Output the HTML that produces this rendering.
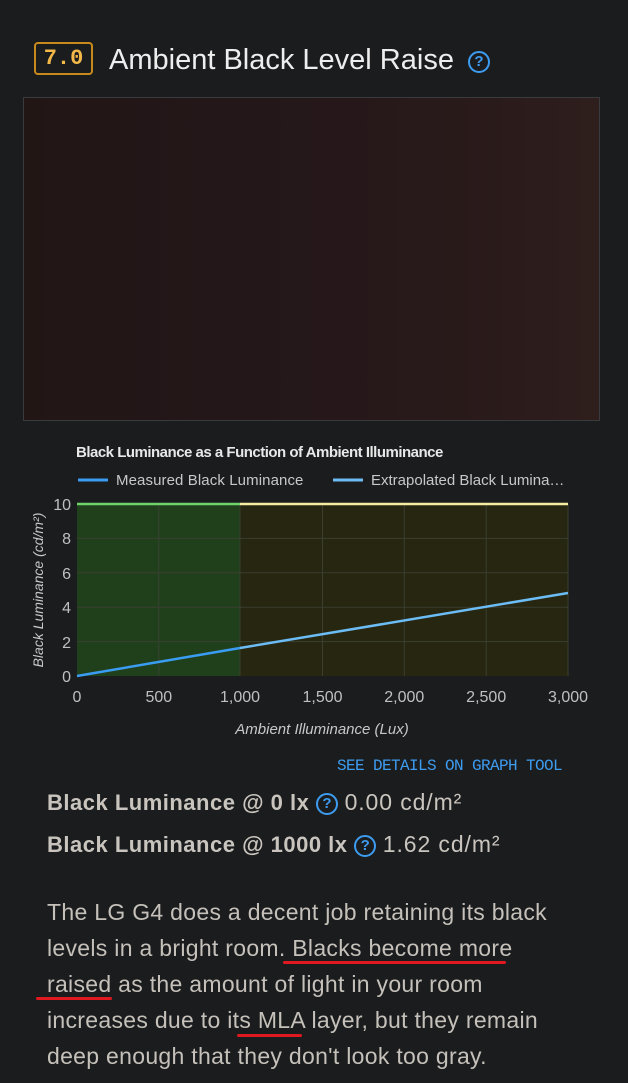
<!DOCTYPE html>
<html><head><meta charset="utf-8"><style>
html,body{margin:0;padding:0;background:#1b1c1e;width:628px;height:1083px;overflow:hidden;font-family:"Liberation Sans",sans-serif;}
.abs{position:absolute;white-space:nowrap;}
.badge{left:34px;top:42px;width:59px;height:33px;box-sizing:border-box;border:2px solid #c98a1c;border-radius:4px;color:#f3b948;font-family:"Liberation Mono",monospace;font-weight:bold;font-size:22px;line-height:29px;text-align:center;}
.title{left:109px;top:42px;color:#eeeeee;font-size:29px;line-height:36px;letter-spacing:0px;}
.q{display:inline-block;border:2px solid #3d9cf0;border-radius:50%;color:#3d9cf0;font-weight:bold;text-align:center;box-sizing:border-box;letter-spacing:0;}
.img{left:23px;top:97px;width:577px;height:324px;box-sizing:border-box;border:1px solid #3a3b3e;background:linear-gradient(90deg,#221615 0%,#24171a 40%,#28191a 70%,#2e1e1c 100%);}
.stat{left:47px;color:#c9c5be;font-size:22px;font-weight:bold;letter-spacing:0.5px;}
.stat span.v{font-weight:normal;letter-spacing:0.9px;font-size:23px;}
.para{left:47px;top:894px;color:#c5c1ba;font-size:23px;line-height:36px;letter-spacing:0.3px;}
.ul{position:absolute;height:3px;background:#e0181f;border-radius:2px;}
</style></head><body>
<div class="abs badge">7.0</div>
<div class="abs title">Ambient Black Level Raise <span class="q" style="width:22px;height:22px;font-size:15px;line-height:18px;vertical-align:3px;margin-left:6px">?</span></div>
<div class="abs img"></div>

<svg class="abs" style="left:0;top:430px" width="628" height="320" viewBox="0 430 628 320">
<text x="76" y="457" fill="#e8e8e8" font-size="15" font-weight="bold" font-family="Liberation Sans" letter-spacing="-0.5">Black Luminance as a Function of Ambient Illuminance</text>
<line x1="78" y1="480" x2="108" y2="480" stroke="#3a9cf2" stroke-width="3"/>
<text x="116" y="485" fill="#c8c8c8" font-size="15" font-family="Liberation Sans" letter-spacing="0.1">Measured Black Luminance</text>
<line x1="333" y1="480" x2="363" y2="480" stroke="#6cbcf5" stroke-width="3"/>
<text x="371" y="485" fill="#c8c8c8" font-size="15" font-family="Liberation Sans">Extrapolated Black Lumina…</text>
<rect x="77" y="504" width="163" height="172" fill="#20401c"/>
<rect x="240" y="504" width="328" height="172" fill="#262611"/>
<g stroke="#3a3f30" stroke-width="1">
<line x1="77" y1="538.4" x2="568" y2="538.4"/><line x1="77" y1="572.8" x2="568" y2="572.8"/><line x1="77" y1="607.2" x2="568" y2="607.2"/><line x1="77" y1="641.6" x2="568" y2="641.6"/>
<line x1="158.8" y1="504" x2="158.8" y2="676"/><line x1="240" y1="504" x2="240" y2="676"/><line x1="322.5" y1="504" x2="322.5" y2="676"/><line x1="404.3" y1="504" x2="404.3" y2="676"/><line x1="486.2" y1="504" x2="486.2" y2="676"/><line x1="568" y1="504" x2="568" y2="676"/>
</g>
<line x1="77" y1="504" x2="240" y2="504" stroke="#6ed36a" stroke-width="2.5"/>
<line x1="240" y1="504" x2="568" y2="504" stroke="#f5eea0" stroke-width="2.5"/>
<line x1="77" y1="676" x2="240" y2="648" stroke="#3a9cf2" stroke-width="2.5"/>
<line x1="240" y1="648" x2="568" y2="593" stroke="#6cbcf5" stroke-width="2.5"/>
<g fill="#c0c0c0" font-size="16" font-family="Liberation Sans" text-anchor="end">
<text x="71" y="510">10</text><text x="71" y="544">8</text><text x="71" y="579">6</text><text x="71" y="613">4</text><text x="71" y="648">2</text><text x="71" y="682">0</text>
</g>
<g fill="#c0c0c0" font-size="16" font-family="Liberation Sans" text-anchor="middle">
<text x="77" y="702">0</text><text x="158.8" y="702">500</text><text x="240" y="702">1,000</text><text x="322.5" y="702">1,500</text><text x="404.3" y="702">2,000</text><text x="486.2" y="702">2,500</text><text x="568" y="702">3,000</text>
</g>
<text x="322" y="734" fill="#c8c8c8" font-size="15" font-style="italic" font-family="Liberation Sans" text-anchor="middle">Ambient Illuminance (Lux)</text>
<text transform="translate(43,590) rotate(-90)" fill="#c8c8c8" font-size="14" font-style="italic" font-family="Liberation Sans" text-anchor="middle">Black Luminance (cd/m²)</text>
</svg>

<div class="abs" style="left:337px;top:757px;color:#3d9cf0;font-family:'Liberation Mono',monospace;font-size:16px;letter-spacing:-0.6px">SEE DETAILS ON GRAPH TOOL</div>
<div class="abs stat" style="top:789px">Black Luminance @ 0 lx <span class="q" style="width:22px;height:22px;font-size:15px;line-height:18px;vertical-align:2px">?</span> <span class="v">0.00 cd/m²</span></div>
<div class="abs stat" style="top:831px">Black Luminance @ 1000 lx <span class="q" style="width:22px;height:22px;font-size:15px;line-height:18px;vertical-align:2px">?</span> <span class="v">1.62 cd/m²</span></div>
<div class="abs para">The LG G4 does a decent job retaining its black<br>levels in a bright room. Blacks become more<br>raised as the amount of light in your room<br>increases due to its MLA layer, but they remain<br>deep enough that they don't look too gray.</div>
<div class="ul" style="left:283px;top:961px;width:223px"></div>
<div class="ul" style="left:36px;top:997px;width:76px"></div>
<div class="ul" style="left:237px;top:1034px;width:65px"></div>
</body></html>
